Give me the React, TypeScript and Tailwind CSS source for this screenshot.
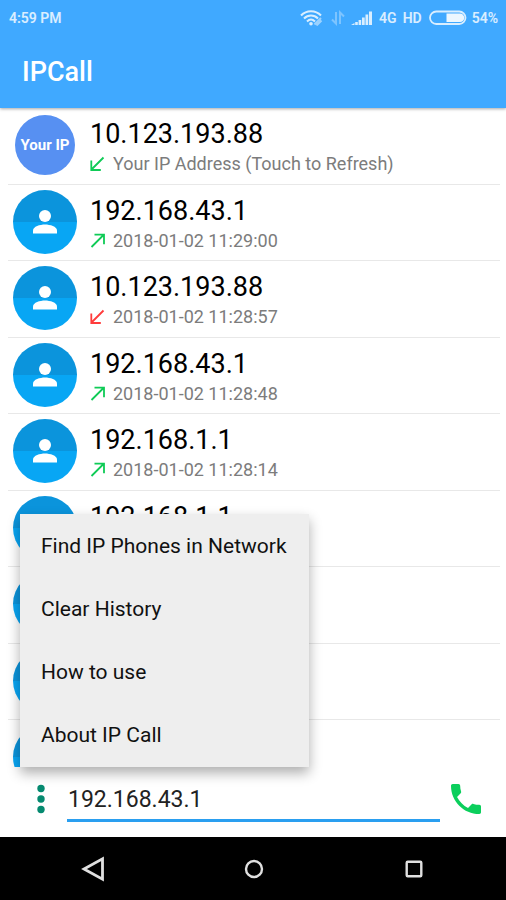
import { useState } from "react";
import { clsx } from "clsx";

type CallDirection = "outgoing" | "incoming" | "missed";

interface CallEntry {
  address: string;
  detail: string;
  direction: CallDirection;
  isSelf?: boolean;
}

const CALLS: CallEntry[] = [
  {
    address: "10.123.193.88",
    detail: "Your IP Address (Touch to Refresh)",
    direction: "incoming",
    isSelf: true,
  },
  { address: "192.168.43.1", detail: "2018-01-02 11:29:00", direction: "outgoing" },
  { address: "10.123.193.88", detail: "2018-01-02 11:28:57", direction: "missed" },
  { address: "192.168.43.1", detail: "2018-01-02 11:28:48", direction: "outgoing" },
  { address: "192.168.1.1", detail: "2018-01-02 11:28:14", direction: "outgoing" },
  { address: "192.168.1.1", detail: "", direction: "outgoing" },
  { address: "", detail: "", direction: "outgoing" },
  { address: "", detail: "", direction: "outgoing" },
  { address: "", detail: "", direction: "outgoing" },
];

const MENU_ITEMS = [
  "Find IP Phones in Network",
  "Clear History",
  "How to use",
  "About IP Call",
];

function StatusBar() {
  return (
    <div className="flex h-9 items-center justify-between pl-[9px] pr-2 text-sm font-semibold text-white/80">
      <span>4:59 PM</span>
      <div className="flex items-center">
        <svg className="mr-2 h-4 w-[23px]" viewBox="0 0 23 16" fill="none" aria-hidden="true">
          <g stroke="currentColor" strokeWidth="2">
            <path d="M1 5.500C6.500-.2 15.500-.2 21 5.500" />
            <path d="M4 8.500c4-4 10-4 14 0" />
            <path d="M7 11.500c2.500-2.500 5.500-2.500 8 0" />
          </g>
          <circle cx="11" cy="13.800" r="1.800" fill="currentColor" />
          <path d="M14.500 14.500l6.500-6.500M16.500 15.500l5-5" stroke="currentColor" strokeWidth="2" opacity=".6" />
        </svg>
        <svg className="mr-1.5 h-4 w-[14px] opacity-40" viewBox="0 0 14 16" fill="none" stroke="currentColor" strokeWidth="2" aria-hidden="true">
          <path d="M5 2v11.500L1 9.500M9 14V2.500l4 4" />
        </svg>
        <svg className="mr-1.5 h-4 w-[22px]" viewBox="0 0 22 16" fill="currentColor" aria-hidden="true">
          <path d="M0 15l3.500-2V15zM4.200 12h2.600v3H4.200zM7.600 10h2.600v5H7.600zM11 7.500h2.700V15H11zM14.500 4.500h2.700V15h-2.700zM18 1.500h3V15h-3z" />
        </svg>
        <span className="mr-1.5">4G</span>
        <span className="mr-[7px]">HD</span>
        <svg className="mr-[5px] h-4 w-[38px]" viewBox="0 0 38 16" fill="none" aria-hidden="true">
          <rect x="1" y="1.500" width="35.500" height="12.500" rx="6.250" stroke="currentColor" strokeWidth="1.800" />
          <path d="M17.500 3.500h13.500a4.250 4.250 0 0 1 0 8.500H17.500z" fill="white" opacity=".9" />
        </svg>
        <span>54%</span>
      </div>
    </div>
  );
}

function DirectionArrow({ direction }: { direction: CallDirection }) {
  return (
    <svg
      className={clsx(
        "h-4 w-4 shrink-0",
        direction === "missed" ? "text-[#ff3b3b]" : "text-[#0fcb56]"
      )}
      viewBox="0 0 16 16"
      fill="none"
      stroke="currentColor"
      strokeWidth="1.800"
      aria-hidden="true"
    >
      {direction === "outgoing" ? (
        <path d="M1.500 14L13.500 2M4.500 1.700h9.500v9.500" />
      ) : (
        <path d="M13.500 1.500L1.500 13.500M1.300 4.500v9.500h9.500" />
      )}
    </svg>
  );
}

function Avatar({ isSelf }: { isSelf?: boolean }) {
  if (isSelf) {
    return (
      <div className="mx-0.5 flex h-15 w-15 shrink-0 items-center justify-center rounded-full bg-[#5790f2] text-[15px] font-bold text-white">
        Your IP
      </div>
    );
  }

  return (
    <div className="flex h-16 w-16 shrink-0 items-center justify-center rounded-full bg-linear-to-b from-[#0b94dc] from-50% to-[#08a6f4] to-50%">
      <svg className="h-6 w-6" viewBox="0 0 24 24" fill="white" aria-hidden="true">
        <circle cx="12" cy="6" r="6" />
        <path d="M0 23.500v-3C0 16.500 7 14.500 12 14.500s12 2 12 6v3z" />
      </svg>
    </div>
  );
}

function CallRow({ call }: { call: CallEntry }) {
  return (
    <li className="ml-2 mr-1.5 h-[77px] border-b border-[#e8e8e8] even:h-[76px]">
      <button type="button" className="flex h-full w-full items-center gap-[13px] pb-0.5 pl-[5px] text-left">
        <Avatar isSelf={call.isSelf} />
        <span className="flex min-w-0 flex-col pt-1.5">
          <span className="h-8 text-[27px] leading-8 text-black">{call.address}</span>
          <span className="flex h-7 items-center gap-[7px] text-[#7c7c7c]">
            {call.detail && (
              <>
                <DirectionArrow direction={call.direction} />
                <span className="truncate text-[18px] leading-7">{call.detail}</span>
              </>
            )}
          </span>
        </span>
      </button>
    </li>
  );
}

function OptionsMenu() {
  return (
    <div
      role="menu"
      className="absolute bottom-0 left-5 z-10 flex w-[289px] flex-col bg-[#eeeeee] pb-px shadow-[0_6px_12px_0_rgba(0,0,0,0.32)]"
    >
      {MENU_ITEMS.map((item) => (
        <button
          key={item}
          type="button"
          role="menuitem"
          className="h-[63px] whitespace-nowrap px-[21px] text-left text-[21px] leading-7 text-[#111111]"
        >
          {item}
        </button>
      ))}
    </div>
  );
}

function DialBar({ onMenuToggle }: { onMenuToggle: () => void }) {
  const [address, setAddress] = useState("192.168.43.1");

  return (
    <div className="flex h-[70px] shrink-0 items-start bg-white pl-7 pr-[22px]">
      <button
        type="button"
        onClick={onMenuToggle}
        className="flex h-16 w-[26px] items-center justify-center text-[#058a70]"
        aria-label="More options"
      >
        <svg className="h-8 w-2" viewBox="0 0 8 32" fill="currentColor" aria-hidden="true">
          <circle cx="4" cy="5.500" r="3.700" />
          <circle cx="4" cy="16" r="3.700" />
          <circle cx="4" cy="26.500" r="3.700" />
        </svg>
      </button>
      <input
        type="text"
        value={address}
        onChange={(e) => setAddress(e.target.value)}
        aria-label="IP address"
        className="ml-[13px] mr-2 h-[55px] min-w-0 flex-1 border-b-3 border-[#2a9ff0] pb-0 pl-px pt-3 text-[23px] text-[#222222] outline-none"
      />
      <button
        type="button"
        className="flex h-16 w-9 items-center justify-center text-[#0bcf5c]"
        aria-label="Call"
      >
        <svg className="h-10 w-10 shrink-0" viewBox="0 0 24 24" fill="currentColor" aria-hidden="true">
          <path d="M6.620 10.790c1.440 2.830 3.760 5.140 6.590 6.590l2.200-2.200c.270-.270.670-.360 1.020-.240 1.120.370 2.330.570 3.570.570.550 0 1 .450 1 1V20c0 .550-.450 1-1 1-9.390 0-17-7.610-17-17 0-.550.450-1 1-1h3.500c.550 0 1 .450 1 1 0 1.250.200 2.450.570 3.570.110.350.030.740-.250 1.020l-2.200 2.200z" />
        </svg>
      </button>
    </div>
  );
}

function NavigationBar() {
  return (
    <nav className="flex h-[63px] shrink-0 items-center justify-between bg-black pl-[78px] pr-[76px] text-[#e0e0e0]">
      <button type="button" className="flex h-8 w-8 items-center justify-center" aria-label="Back">
        <svg className="h-7 w-7" viewBox="0 0 28 28" fill="none" stroke="currentColor" strokeWidth="2.800" aria-hidden="true">
          <path d="M22.500 3.800v20.400L4 14z" />
        </svg>
      </button>
      <button type="button" className="flex h-8 w-8 items-center justify-center" aria-label="Home">
        <svg className="h-5 w-5" viewBox="0 0 20 20" fill="none" stroke="currentColor" strokeWidth="2.400" aria-hidden="true">
          <circle cx="10" cy="10" r="8" />
        </svg>
      </button>
      <button type="button" className="flex h-8 w-8 items-center justify-center" aria-label="Recent apps">
        <svg className="h-[18px] w-[18px]" viewBox="0 0 18 18" fill="none" stroke="currentColor" strokeWidth="2.400" aria-hidden="true">
          <rect x="1.700" y="1.700" width="14.600" height="14.600" rx="1" />
        </svg>
      </button>
    </nav>
  );
}

export default function App() {
  const [menuOpen, setMenuOpen] = useState(true);

  return (
    <div className="flex h-screen flex-col overflow-hidden bg-white font-['Roboto',sans-serif]">
      <header className="z-10 shrink-0 bg-[#40a9ff] shadow-[0_1px_3px_rgba(0,0,0,0.35)]">
        <StatusBar />
        <h1 className="px-[22px] text-[27px] font-medium leading-[72px] text-white">
          IPCall
        </h1>
      </header>
      <main className="relative min-h-0 flex-1">
        <ul className="h-full overflow-hidden">
          {CALLS.map((call, index) => (
            <CallRow key={index} call={call} />
          ))}
        </ul>
        {menuOpen && <OptionsMenu />}
      </main>
      <DialBar onMenuToggle={() => setMenuOpen((prev) => !prev)} />
      <NavigationBar />
    </div>
  );
}
